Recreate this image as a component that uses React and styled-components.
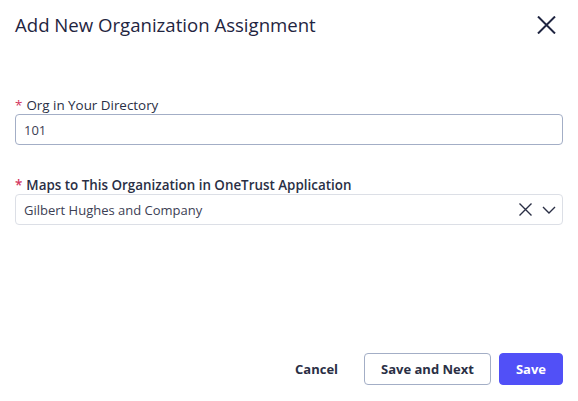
import React from "react";
import styled, { createGlobalStyle } from "styled-components";

const Global = createGlobalStyle`
  html, body { margin: 0; padding: 0; background: #fff; }
  body { font-family: "Open Sans", "Noto Sans", sans-serif; }
  * { box-sizing: border-box; }
`;

const Dialog = styled.div`
  width: 578px;
  height: 401px;
  display: flex;
  flex-direction: column;
  padding: 12px 15px 16px 15px;
  background: #fff;
`;

const Header = styled.div`
  display: flex;
  justify-content: space-between;
  align-items: center;
  height: 26px;
`;

const Title = styled.h2`
  margin: 0;
  font-size: 18.6px;
  line-height: 24px;
  font-weight: 400;
  color: #1f2541;
`;

const CloseButton = styled.button`
  border: 0;
  background: none;
  padding: 0;
  width: 20px;
  height: 20px;
  margin-right: 7px;
  display: flex;
  align-items: center;
  justify-content: center;
  cursor: pointer;
`;

const Body = styled.div`
  flex: 1;
  display: flex;
  flex-direction: column;
  padding-top: 58px;
  gap: 31px;
`;

const Field = styled.div`
  display: flex;
  flex-direction: column;
`;

const Label = styled.label`
  font-size: 13.4px;
  line-height: 18px;
  font-weight: ${(p) => (p.$bold ? 600 : 400)};
  color: #2a2f45;
`;

const Req = styled.span`
  color: #d3365f;
  margin-right: 4px;
`;

const Input = styled.div`
  height: 31px;
  border: 1px solid ${(p) => (p.$active ? "#a3aec6" : "#dcdfe6")};
  border-radius: 4px;
  display: flex;
  align-items: center;
  padding: 0 8px;
  font-size: 13px;
  color: #3c4054;
`;

const Value = styled.span`
  flex: 1;
`;

const Icons = styled.div`
  display: flex;
  align-items: center;
  gap: 10px;
  margin-right: -2px;
`;

const Footer = styled.div`
  display: flex;
  justify-content: flex-end;
  align-items: center;
  gap: 8px;
`;

const Button = styled.button`
  height: 32px;
  border-radius: 4px;
  font-family: "Open Sans", "Noto Sans", sans-serif;
  font-size: 13px;
  font-weight: 700;
  padding: 0 ${(p) => p.$px || 16}px;
  cursor: pointer;
  border: 1px solid
    ${(p) =>
      p.$variant === "primary"
        ? "#5150f7"
        : p.$variant === "outline"
        ? "#a3aec6"
        : "transparent"};
  background: ${(p) => (p.$variant === "primary" ? "#5150f7" : "#fff")};
  color: ${(p) => (p.$variant === "primary" ? "#fff" : "#2a2f45")};
`;

export default function App() {
  return (
    <>
      <Global />
      <Dialog>
        <Header>
          <Title>Add New Organization Assignment</Title>
          <CloseButton aria-label="Close">
            <svg width="19" height="18" viewBox="0 0 19 18">
              <path d="M1 0.5 L18 17.5 M18 0.5 L1 17.5" stroke="#1f2541" strokeWidth="2" fill="none" />
            </svg>
          </CloseButton>
        </Header>
        <Body>
          <Field>
            <Label>
              <Req>*</Req>Org in Your Directory
            </Label>
            <Input $active>
              <Value>101</Value>
            </Input>
          </Field>
          <Field>
            <Label $bold>
              <Req>*</Req>Maps to This Organization in OneTrust Application
            </Label>
            <Input>
              <Value>Gilbert Hughes and Company</Value>
              <Icons>
                <svg width="13" height="13" viewBox="0 0 13 13">
                  <path d="M0.5 0.5 L12.5 12.5 M12.5 0.5 L0.5 12.5" stroke="#2a2f45" strokeWidth="1.4" fill="none" />
                </svg>
                <svg width="14" height="8" viewBox="0 0 14 8">
                  <path d="M1 1 L7 7 L13 1" stroke="#2a2f45" strokeWidth="1.4" fill="none" />
                </svg>
              </Icons>
            </Input>
          </Field>
        </Body>
        <Footer>
          <Button $px={17}>Cancel</Button>
          <Button $variant="outline">Save and Next</Button>
          <Button $variant="primary">Save</Button>
        </Footer>
      </Dialog>
    </>
  );
}
